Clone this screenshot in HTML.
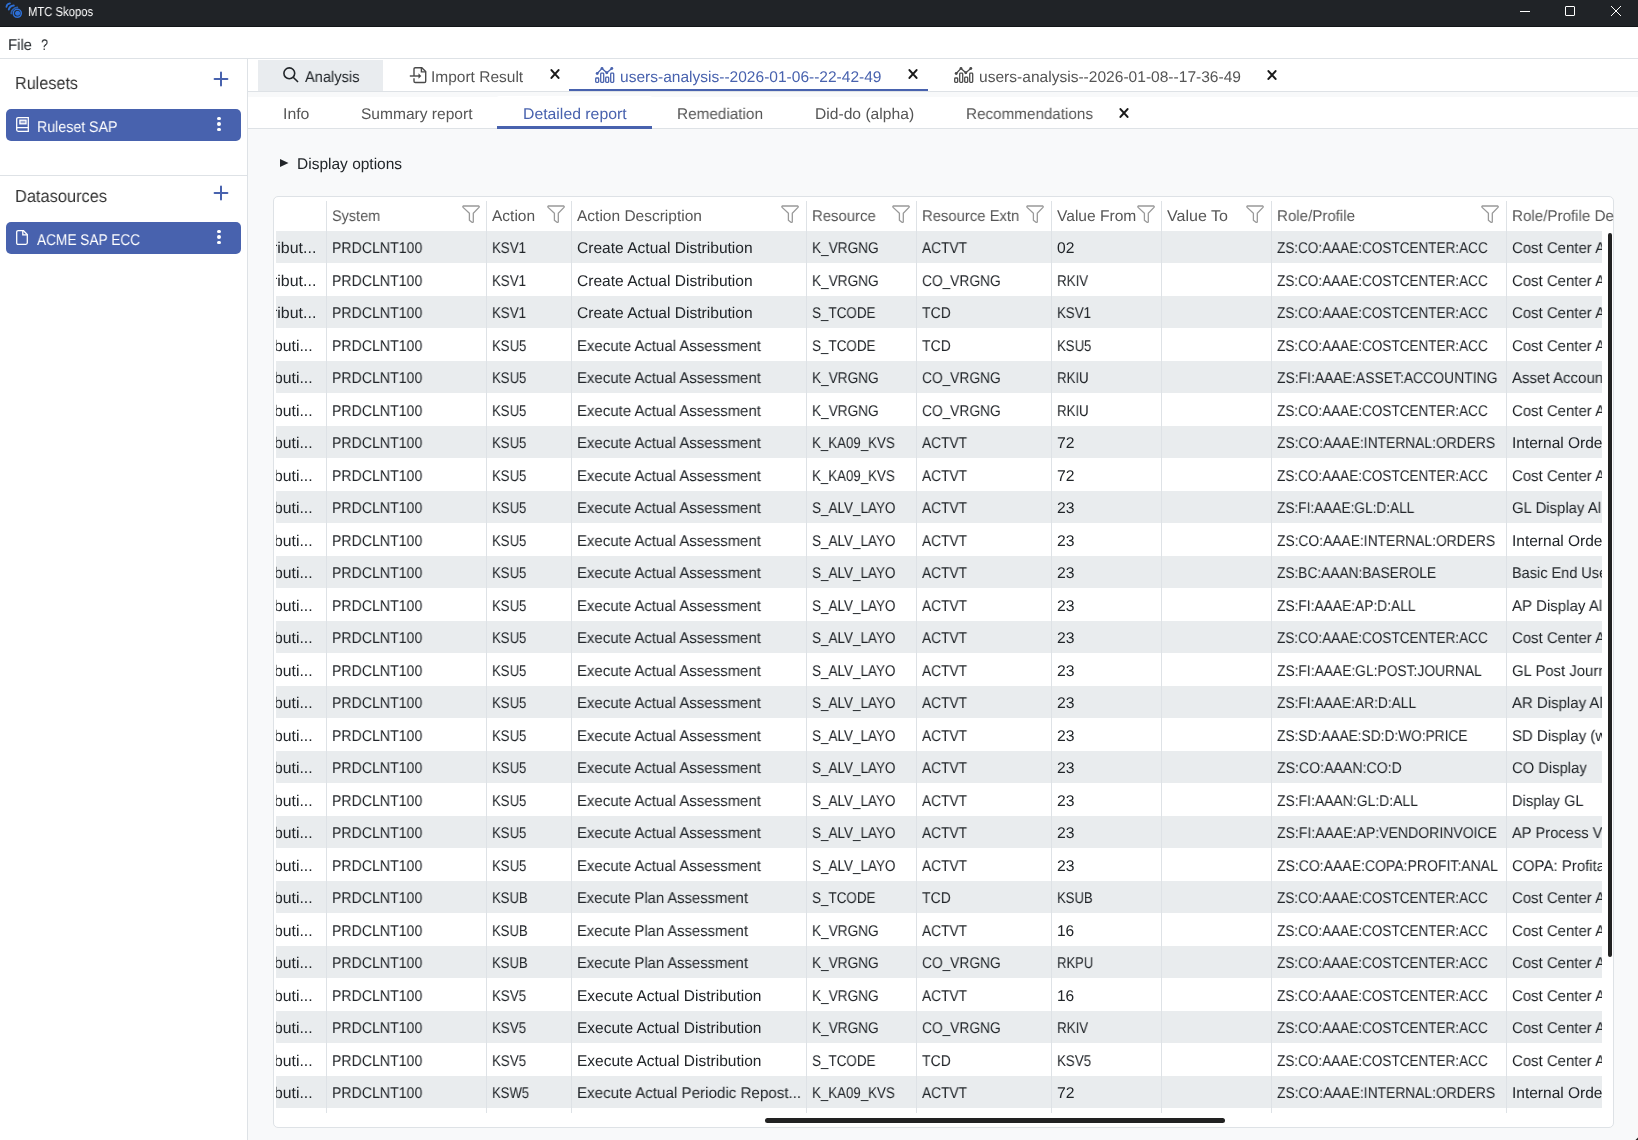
<!DOCTYPE html>
<html><head><meta charset="utf-8"><style>
*{box-sizing:border-box}
html,body{margin:0;padding:0}
body{width:1638px;height:1140px;overflow:hidden;position:relative;background:#f8f9fa;font-family:"Liberation Sans",sans-serif;color:#212529;text-rendering:geometricPrecision}
.a{position:absolute}
.t{position:absolute;white-space:nowrap;line-height:1;transform-origin:0 0;will-change:transform}
svg{position:absolute;overflow:visible}
</style></head><body>
<div class="a" style="left:0;top:0;width:1638px;height:26px;background:#202327"></div>
<div class="a" style="left:0;top:26px;width:1638px;height:1px;background:#121518"></div>
<svg style="left:0;top:0" width="24" height="22" viewBox="0 0 24 22"><g fill="none" stroke="#2d6fd6" stroke-linecap="round"><path d="M6.4 6.8A4.2 4.2 0 0 1 10 3.3" stroke-width="1.7"/><path d="M8.8 9.6A5.6 5.6 0 0 1 13.8 5.5" stroke-width="1.9"/><path d="M11.2 13.6A6.4 6.4 0 0 1 17.4 7.4" stroke-width="1.6" stroke-dasharray="1.2 0.9" opacity="0.8"/><circle cx="17.3" cy="13.3" r="4" stroke-width="1.6"/></g><circle cx="17.6" cy="13.3" r="2.5" fill="#2d6fd6"/></svg>
<div class="t" style="left:27.50px;top:5.20px;font-size:13px;transform:scaleX(0.8652);color:#ffffff;">MTC Skopos</div>
<div class="a" style="left:1520px;top:11px;width:10px;height:1px;background:#fff"></div>
<div class="a" style="left:1565px;top:6px;width:10px;height:10px;border:1px solid #fff;border-radius:1px"></div>
<svg style="left:1611px;top:6px" width="10" height="10" viewBox="0 0 10 10"><path d="M0 0L10 10M10 0L0 10" stroke="#fff" stroke-width="1"/></svg>
<div class="a" style="left:0;top:27px;width:1638px;height:31px;background:#fff"></div>
<div class="t" style="left:8.20px;top:37.68px;font-size:15.5px;transform:scaleX(0.9609);color:#212529;">File</div>
<div class="t" style="left:41.00px;top:37.68px;font-size:15.5px;transform:scaleX(0.8120);color:#212529;">?</div>
<div class="a" style="left:0;top:58px;width:1638px;height:1px;background:#dee2e6"></div>
<div class="a" style="left:0;top:59px;width:247px;height:1081px;background:#fff"></div>
<div class="a" style="left:247px;top:59px;width:1px;height:1081px;background:#dee2e6"></div>
<div class="t" style="left:14.80px;top:74.69px;font-size:17.5px;transform:scaleX(0.9253);color:#333;">Rulesets</div>
<svg style="left:214px;top:72.1px" width="14" height="14" viewBox="0 0 14 14"><path d="M7 0.6V13.4M0.6 7H13.4" stroke="#4862ae" stroke-width="2" stroke-linecap="round"/></svg>
<div class="a" style="left:6px;top:109px;width:235px;height:32px;background:#4862ae;border-radius:5px"></div><svg style="left:16px;top:117px" width="13" height="15" viewBox="0 0 13 15"><g fill="none" stroke="#fff" stroke-width="1.3"><path d="M12.3 0.7H2.2Q0.7 0.7 0.7 2.2V12.8Q0.7 14.3 2.2 14.3H12.3Z"/><path d="M0.7 11.2Q0.7 10.7 2 10.7H12.3"/><rect x="3.9" y="3.2" width="6.1" height="3.6" fill="rgba(255,255,255,0.45)"/></g></svg><div class="t" style="left:36.50px;top:119.58px;font-size:15.5px;transform:scaleX(0.9161);color:#fff;">Ruleset SAP</div><div class="a" style="left:217.3px;top:116.7px;width:3.8px;height:3.8px;border-radius:50%;background:#fff"></div><div class="a" style="left:217.3px;top:122.2px;width:3.8px;height:3.8px;border-radius:50%;background:#fff"></div><div class="a" style="left:217.3px;top:127.7px;width:3.8px;height:3.8px;border-radius:50%;background:#fff"></div>
<div class="a" style="left:0;top:175px;width:247px;height:1px;background:#dee2e6"></div>
<div class="t" style="left:14.80px;top:187.69px;font-size:17.5px;transform:scaleX(0.9365);color:#333;">Datasources</div>
<svg style="left:214px;top:186.3px" width="14" height="14" viewBox="0 0 14 14"><path d="M7 0.6V13.4M0.6 7H13.4" stroke="#4862ae" stroke-width="2" stroke-linecap="round"/></svg>
<div class="a" style="left:6px;top:222px;width:235px;height:32px;background:#4862ae;border-radius:5px"></div><svg style="left:16px;top:230px" width="12" height="15" viewBox="0 0 12 15"><g fill="none" stroke="#fff" stroke-width="1.3"><path d="M2.2 0.7H7.5L11.3 4.5V12.8Q11.3 14.3 9.8 14.3H2.2Q0.7 14.3 0.7 12.8V2.2Q0.7 0.7 2.2 0.7Z"/><path d="M6.8 0.7V4.8H11.3"/></g></svg><div class="t" style="left:36.50px;top:232.58px;font-size:15.5px;transform:scaleX(0.8814);color:#fff;">ACME SAP ECC</div><div class="a" style="left:217.3px;top:229.7px;width:3.8px;height:3.8px;border-radius:50%;background:#fff"></div><div class="a" style="left:217.3px;top:235.2px;width:3.8px;height:3.8px;border-radius:50%;background:#fff"></div><div class="a" style="left:217.3px;top:240.7px;width:3.8px;height:3.8px;border-radius:50%;background:#fff"></div>
<div class="a" style="left:248px;top:59px;width:1390px;height:32px;background:#fff"></div>
<div class="a" style="left:248px;top:91px;width:1390px;height:1px;background:#dee2e6"></div>
<div class="a" style="left:258px;top:60px;width:125px;height:31px;background:#e9ecef"></div>
<svg style="left:283px;top:67px" width="16" height="16" viewBox="0 0 16 16"><g fill="none" stroke="#212529" stroke-width="1.6"><circle cx="6.3" cy="6.3" r="5.4"/><path d="M10.2 10.2L15 15"/></g></svg>
<div class="t" style="left:304.50px;top:69.88px;font-size:15.5px;transform:scaleX(0.9443);color:#212529;">Analysis</div>
<svg style="left:409px;top:67px" width="18" height="16" viewBox="0 0 18 16"><g fill="none" stroke="#4a4a4a" stroke-width="1.4"><path d="M5 9V2Q5 0.7 6.3 0.7H12.8L16.7 4.6V14.2Q16.7 15.5 15.4 15.5H6.3Q5 15.5 5 14.2V11.3"/><path d="M12.4 0.7V4.9H16.7"/><path d="M0.8 9H10.5"/></g><path d="M9.5 6.2L12.3 9L9.5 11.8Z" fill="#4a4a4a"/></svg>
<div class="t" style="left:430.70px;top:69.88px;font-size:15.5px;transform:scaleX(0.9982);color:#555;">Import Result</div>
<svg style="left:549.7px;top:69.3px" width="10" height="10" viewBox="0 0 10 10"><path d="M1.45 1.1L8.55 8.9M8.55 1.1L1.45 8.9" stroke="#1a1a1a" stroke-width="2.1" stroke-linecap="round"/></svg>
<svg style="left:594.5px;top:67px" width="20" height="16" viewBox="0 0 20 16"><g fill="none" stroke="#4862ae" stroke-width="1.3" stroke-linejoin="round" stroke-linecap="round"><path d="M2.2 6.5L7 1.4L11.8 5.7L16.8 1.5"/><rect x="0.7" y="11" width="3" height="4.3" rx="0.8"/><rect x="5.7" y="6.2" width="3" height="9.1" rx="0.8"/><rect x="10.7" y="10.2" width="3" height="5.1" rx="0.8"/><rect x="15.7" y="6.2" width="3" height="9.1" rx="0.8"/></g><g fill="#4862ae"><circle cx="2.2" cy="6.5" r="1.45"/><circle cx="7" cy="1.4" r="1.45"/><circle cx="11.8" cy="5.7" r="1.45"/><circle cx="16.8" cy="1.5" r="1.45"/></g></svg>
<div class="t" style="left:620.00px;top:69.88px;font-size:15.5px;transform:scaleX(1.0018);color:#4862ae;">users-analysis--2026-01-06--22-42-49</div>
<svg style="left:907.6px;top:69.3px" width="10" height="10" viewBox="0 0 10 10"><path d="M1.45 1.1L8.55 8.9M8.55 1.1L1.45 8.9" stroke="#1a1a1a" stroke-width="2.1" stroke-linecap="round"/></svg>
<div class="a" style="left:569px;top:88.5px;width:359px;height:2.5px;background:#4862ae"></div>
<svg style="left:953.5px;top:67px" width="20" height="16" viewBox="0 0 20 16"><g fill="none" stroke="#4a4a4a" stroke-width="1.3" stroke-linejoin="round" stroke-linecap="round"><path d="M2.2 6.5L7 1.4L11.8 5.7L16.8 1.5"/><rect x="0.7" y="11" width="3" height="4.3" rx="0.8"/><rect x="5.7" y="6.2" width="3" height="9.1" rx="0.8"/><rect x="10.7" y="10.2" width="3" height="5.1" rx="0.8"/><rect x="15.7" y="6.2" width="3" height="9.1" rx="0.8"/></g><g fill="#4a4a4a"><circle cx="2.2" cy="6.5" r="1.45"/><circle cx="7" cy="1.4" r="1.45"/><circle cx="11.8" cy="5.7" r="1.45"/><circle cx="16.8" cy="1.5" r="1.45"/></g></svg>
<div class="t" style="left:978.50px;top:69.88px;font-size:15.5px;transform:scaleX(1.0037);color:#555;">users-analysis--2026-01-08--17-36-49</div>
<svg style="left:1266.7px;top:69.7px" width="10" height="10" viewBox="0 0 10 10"><path d="M1.45 1.1L8.55 8.9M8.55 1.1L1.45 8.9" stroke="#1a1a1a" stroke-width="2.1" stroke-linecap="round"/></svg>
<div class="a" style="left:248px;top:97px;width:1390px;height:31px;background:#fff"></div>
<div class="a" style="left:497px;top:96px;width:155px;height:2px;background:#fff;border-radius:3px 3px 0 0"></div>
<div class="a" style="left:248px;top:128px;width:1390px;height:1px;background:#dee2e6"></div>
<div class="t" style="left:283.00px;top:106.88px;font-size:15.5px;transform:scaleX(1.0211);color:#555;">Info</div>
<div class="t" style="left:360.50px;top:106.88px;font-size:15.5px;transform:scaleX(1.0035);color:#555;">Summary report</div>
<div class="t" style="left:677.00px;top:106.88px;font-size:15.5px;transform:scaleX(0.9883);color:#555;">Remediation</div>
<div class="t" style="left:814.50px;top:106.88px;font-size:15.5px;transform:scaleX(1.0090);color:#555;">Did-do (alpha)</div>
<div class="t" style="left:965.50px;top:106.88px;font-size:15.5px;transform:scaleX(0.9827);color:#555;">Recommendations</div>
<div class="t" style="left:522.50px;top:106.88px;font-size:15.5px;transform:scaleX(1.0190);color:#4862ae;">Detailed report</div>
<div class="a" style="left:497px;top:126px;width:155px;height:2.5px;background:#4862ae"></div>
<svg style="left:1118.7px;top:108px" width="10" height="10" viewBox="0 0 10 10"><path d="M1.45 1.1L8.55 8.9M8.55 1.1L1.45 8.9" stroke="#1a1a1a" stroke-width="2.1" stroke-linecap="round"/></svg>
<svg style="left:279.5px;top:158.5px" width="9" height="9" viewBox="0 0 9 9"><path d="M0 0L8.5 4L0 8Z" fill="#212529"/></svg>
<div class="t" style="left:296.60px;top:156.88px;font-size:15.5px;transform:scaleX(0.9990);color:#212529;">Display options</div>
<div class="a" style="left:273px;top:196px;width:1341px;height:932px;background:#fff;border:1px solid #dee2e6;border-radius:5px"></div>
<div class="a" style="left:276px;top:231.0px;width:1326px;height:32px;background:#e9ecee"></div><div class="a" style="left:276px;top:296.0px;width:1326px;height:32px;background:#e9ecee"></div><div class="a" style="left:276px;top:361.0px;width:1326px;height:32px;background:#e9ecee"></div><div class="a" style="left:276px;top:426.0px;width:1326px;height:32px;background:#e9ecee"></div><div class="a" style="left:276px;top:491.0px;width:1326px;height:32px;background:#e9ecee"></div><div class="a" style="left:276px;top:556.0px;width:1326px;height:32px;background:#e9ecee"></div><div class="a" style="left:276px;top:621.0px;width:1326px;height:32px;background:#e9ecee"></div><div class="a" style="left:276px;top:686.0px;width:1326px;height:32px;background:#e9ecee"></div><div class="a" style="left:276px;top:751.0px;width:1326px;height:32px;background:#e9ecee"></div><div class="a" style="left:276px;top:816.0px;width:1326px;height:32px;background:#e9ecee"></div><div class="a" style="left:276px;top:881.0px;width:1326px;height:32px;background:#e9ecee"></div><div class="a" style="left:276px;top:946.0px;width:1326px;height:32px;background:#e9ecee"></div><div class="a" style="left:276px;top:1011.0px;width:1326px;height:32px;background:#e9ecee"></div><div class="a" style="left:276px;top:1076.0px;width:1326px;height:32px;background:#e9ecee"></div>
<div class="a" style="left:326px;top:201px;width:1px;height:912px;background:#dee2e6"></div>
<div class="a" style="left:486px;top:201px;width:1px;height:912px;background:#dee2e6"></div>
<div class="a" style="left:571px;top:201px;width:1px;height:912px;background:#dee2e6"></div>
<div class="a" style="left:806px;top:201px;width:1px;height:912px;background:#dee2e6"></div>
<div class="a" style="left:916px;top:201px;width:1px;height:912px;background:#dee2e6"></div>
<div class="a" style="left:1051px;top:201px;width:1px;height:912px;background:#dee2e6"></div>
<div class="a" style="left:1161px;top:201px;width:1px;height:912px;background:#dee2e6"></div>
<div class="a" style="left:1271px;top:201px;width:1px;height:912px;background:#dee2e6"></div>
<div class="a" style="left:1506px;top:201px;width:1px;height:912px;background:#dee2e6"></div>
<div class="t" style="left:332.00px;top:208.88px;font-size:15.5px;transform:scaleX(0.9323);color:#555;">System</div>
<div class="t" style="left:492.00px;top:208.88px;font-size:15.5px;transform:scaleX(0.9946);color:#555;">Action</div>
<div class="t" style="left:577.00px;top:208.88px;font-size:15.5px;transform:scaleX(0.9995);color:#555;">Action Description</div>
<div class="t" style="left:812.00px;top:208.88px;font-size:15.5px;transform:scaleX(0.9607);color:#555;">Resource</div>
<div class="t" style="left:922.00px;top:208.88px;font-size:15.5px;transform:scaleX(0.9564);color:#555;">Resource Extn</div>
<div class="t" style="left:1057.00px;top:208.88px;font-size:15.5px;transform:scaleX(1.0039);color:#555;">Value From</div>
<div class="t" style="left:1167.00px;top:208.88px;font-size:15.5px;transform:scaleX(1.0346);color:#555;">Value To</div>
<div class="t" style="left:1277.00px;top:208.88px;font-size:15.5px;transform:scaleX(0.9740);color:#555;">Role/Profile</div>
<div class="t" style="left:1512.00px;top:208.88px;font-size:15.5px;transform:scaleX(0.9776);color:#555;">Role/Profile De</div>
<svg style="left:461.5px;top:205px" width="18" height="18" viewBox="0 0 18 18"><path d="M1.2 1H16.8Q17.6 1.4 17 2.4L11.3 8.3V16.8Q11 17.9 9.9 17.2L7.4 15.2V8.3L1.1 2.4Q0.5 1.4 1.2 1Z" fill="none" stroke="#999" stroke-width="1.3" stroke-linejoin="round"/></svg>
<svg style="left:546.5px;top:205px" width="18" height="18" viewBox="0 0 18 18"><path d="M1.2 1H16.8Q17.6 1.4 17 2.4L11.3 8.3V16.8Q11 17.9 9.9 17.2L7.4 15.2V8.3L1.1 2.4Q0.5 1.4 1.2 1Z" fill="none" stroke="#999" stroke-width="1.3" stroke-linejoin="round"/></svg>
<svg style="left:780.5px;top:205px" width="18" height="18" viewBox="0 0 18 18"><path d="M1.2 1H16.8Q17.6 1.4 17 2.4L11.3 8.3V16.8Q11 17.9 9.9 17.2L7.4 15.2V8.3L1.1 2.4Q0.5 1.4 1.2 1Z" fill="none" stroke="#999" stroke-width="1.3" stroke-linejoin="round"/></svg>
<svg style="left:891.5px;top:205px" width="18" height="18" viewBox="0 0 18 18"><path d="M1.2 1H16.8Q17.6 1.4 17 2.4L11.3 8.3V16.8Q11 17.9 9.9 17.2L7.4 15.2V8.3L1.1 2.4Q0.5 1.4 1.2 1Z" fill="none" stroke="#999" stroke-width="1.3" stroke-linejoin="round"/></svg>
<svg style="left:1026px;top:205px" width="18" height="18" viewBox="0 0 18 18"><path d="M1.2 1H16.8Q17.6 1.4 17 2.4L11.3 8.3V16.8Q11 17.9 9.9 17.2L7.4 15.2V8.3L1.1 2.4Q0.5 1.4 1.2 1Z" fill="none" stroke="#999" stroke-width="1.3" stroke-linejoin="round"/></svg>
<svg style="left:1136.5px;top:205px" width="18" height="18" viewBox="0 0 18 18"><path d="M1.2 1H16.8Q17.6 1.4 17 2.4L11.3 8.3V16.8Q11 17.9 9.9 17.2L7.4 15.2V8.3L1.1 2.4Q0.5 1.4 1.2 1Z" fill="none" stroke="#999" stroke-width="1.3" stroke-linejoin="round"/></svg>
<svg style="left:1246px;top:205px" width="18" height="18" viewBox="0 0 18 18"><path d="M1.2 1H16.8Q17.6 1.4 17 2.4L11.3 8.3V16.8Q11 17.9 9.9 17.2L7.4 15.2V8.3L1.1 2.4Q0.5 1.4 1.2 1Z" fill="none" stroke="#999" stroke-width="1.3" stroke-linejoin="round"/></svg>
<svg style="left:1481px;top:205px" width="18" height="18" viewBox="0 0 18 18"><path d="M1.2 1H16.8Q17.6 1.4 17 2.4L11.3 8.3V16.8Q11 17.9 9.9 17.2L7.4 15.2V8.3L1.1 2.4Q0.5 1.4 1.2 1Z" fill="none" stroke="#999" stroke-width="1.3" stroke-linejoin="round"/></svg>
<div class="a" style="left:276px;top:197px;width:1326px;height:930px;overflow:hidden"><div class="t" style="left:-3.61px;top:43.68px;font-size:15.5px;transform:scaleX(1.0287);">ribut...</div><div class="t" style="left:56.00px;top:43.68px;font-size:15.5px;transform:scaleX(0.9115);">PRDCLNT100</div><div class="t" style="left:216.00px;top:43.68px;font-size:15.5px;transform:scaleX(0.8574);">KSV1</div><div class="t" style="left:301.00px;top:43.68px;font-size:15.5px;transform:scaleX(1.0043);">Create Actual Distribution</div><div class="t" style="left:536.00px;top:43.68px;font-size:15.5px;transform:scaleX(0.8792);">K_VRGNG</div><div class="t" style="left:646.00px;top:43.68px;font-size:15.5px;transform:scaleX(0.8867);">ACTVT</div><div class="t" style="left:781.00px;top:43.68px;font-size:15.5px;transform:scaleX(1.0108);">02</div><div class="t" style="left:1001.00px;top:43.68px;font-size:15.5px;transform:scaleX(0.8737);">ZS:CO:AAAE:COSTCENTER:ACC</div><div class="t" style="left:1236.00px;top:43.68px;font-size:15.5px;transform:scaleX(0.9643);">Cost Center A</div><div class="t" style="left:-3.61px;top:76.68px;font-size:15.5px;transform:scaleX(1.0287);">ribut...</div><div class="t" style="left:56.00px;top:76.68px;font-size:15.5px;transform:scaleX(0.9115);">PRDCLNT100</div><div class="t" style="left:216.00px;top:76.68px;font-size:15.5px;transform:scaleX(0.8574);">KSV1</div><div class="t" style="left:301.00px;top:76.68px;font-size:15.5px;transform:scaleX(1.0043);">Create Actual Distribution</div><div class="t" style="left:536.00px;top:76.68px;font-size:15.5px;transform:scaleX(0.8792);">K_VRGNG</div><div class="t" style="left:646.00px;top:76.68px;font-size:15.5px;transform:scaleX(0.8866);">CO_VRGNG</div><div class="t" style="left:781.00px;top:76.68px;font-size:15.5px;transform:scaleX(0.8642);">RKIV</div><div class="t" style="left:1001.00px;top:76.68px;font-size:15.5px;transform:scaleX(0.8737);">ZS:CO:AAAE:COSTCENTER:ACC</div><div class="t" style="left:1236.00px;top:76.68px;font-size:15.5px;transform:scaleX(0.9643);">Cost Center A</div><div class="t" style="left:-3.61px;top:108.68px;font-size:15.5px;transform:scaleX(1.0287);">ribut...</div><div class="t" style="left:56.00px;top:108.68px;font-size:15.5px;transform:scaleX(0.9115);">PRDCLNT100</div><div class="t" style="left:216.00px;top:108.68px;font-size:15.5px;transform:scaleX(0.8574);">KSV1</div><div class="t" style="left:301.00px;top:108.68px;font-size:15.5px;transform:scaleX(1.0043);">Create Actual Distribution</div><div class="t" style="left:536.00px;top:108.68px;font-size:15.5px;transform:scaleX(0.8677);">S_TCODE</div><div class="t" style="left:646.00px;top:108.68px;font-size:15.5px;transform:scaleX(0.9035);">TCD</div><div class="t" style="left:781.00px;top:108.68px;font-size:15.5px;transform:scaleX(0.8574);">KSV1</div><div class="t" style="left:1001.00px;top:108.68px;font-size:15.5px;transform:scaleX(0.8737);">ZS:CO:AAAE:COSTCENTER:ACC</div><div class="t" style="left:1236.00px;top:108.68px;font-size:15.5px;transform:scaleX(0.9643);">Cost Center A</div><div class="t" style="left:-2.45px;top:141.68px;font-size:15.5px;transform:scaleX(1.0196);">buti...</div><div class="t" style="left:56.00px;top:141.68px;font-size:15.5px;transform:scaleX(0.9115);">PRDCLNT100</div><div class="t" style="left:216.00px;top:141.68px;font-size:15.5px;transform:scaleX(0.8516);">KSU5</div><div class="t" style="left:301.00px;top:141.68px;font-size:15.5px;transform:scaleX(0.9659);">Execute Actual Assessment</div><div class="t" style="left:536.00px;top:141.68px;font-size:15.5px;transform:scaleX(0.8677);">S_TCODE</div><div class="t" style="left:646.00px;top:141.68px;font-size:15.5px;transform:scaleX(0.9035);">TCD</div><div class="t" style="left:781.00px;top:141.68px;font-size:15.5px;transform:scaleX(0.8516);">KSU5</div><div class="t" style="left:1001.00px;top:141.68px;font-size:15.5px;transform:scaleX(0.8737);">ZS:CO:AAAE:COSTCENTER:ACC</div><div class="t" style="left:1236.00px;top:141.68px;font-size:15.5px;transform:scaleX(0.9643);">Cost Center A</div><div class="t" style="left:-2.45px;top:173.68px;font-size:15.5px;transform:scaleX(1.0196);">buti...</div><div class="t" style="left:56.00px;top:173.68px;font-size:15.5px;transform:scaleX(0.9115);">PRDCLNT100</div><div class="t" style="left:216.00px;top:173.68px;font-size:15.5px;transform:scaleX(0.8516);">KSU5</div><div class="t" style="left:301.00px;top:173.68px;font-size:15.5px;transform:scaleX(0.9659);">Execute Actual Assessment</div><div class="t" style="left:536.00px;top:173.68px;font-size:15.5px;transform:scaleX(0.8792);">K_VRGNG</div><div class="t" style="left:646.00px;top:173.68px;font-size:15.5px;transform:scaleX(0.8866);">CO_VRGNG</div><div class="t" style="left:781.00px;top:173.68px;font-size:15.5px;transform:scaleX(0.8550);">RKIU</div><div class="t" style="left:1001.00px;top:173.68px;font-size:15.5px;transform:scaleX(0.8982);">ZS:FI:AAAE:ASSET:ACCOUNTING</div><div class="t" style="left:1236.00px;top:173.68px;font-size:15.5px;transform:scaleX(0.9709);">Asset Accoun</div><div class="t" style="left:-2.45px;top:206.68px;font-size:15.5px;transform:scaleX(1.0196);">buti...</div><div class="t" style="left:56.00px;top:206.68px;font-size:15.5px;transform:scaleX(0.9115);">PRDCLNT100</div><div class="t" style="left:216.00px;top:206.68px;font-size:15.5px;transform:scaleX(0.8516);">KSU5</div><div class="t" style="left:301.00px;top:206.68px;font-size:15.5px;transform:scaleX(0.9659);">Execute Actual Assessment</div><div class="t" style="left:536.00px;top:206.68px;font-size:15.5px;transform:scaleX(0.8792);">K_VRGNG</div><div class="t" style="left:646.00px;top:206.68px;font-size:15.5px;transform:scaleX(0.8866);">CO_VRGNG</div><div class="t" style="left:781.00px;top:206.68px;font-size:15.5px;transform:scaleX(0.8550);">RKIU</div><div class="t" style="left:1001.00px;top:206.68px;font-size:15.5px;transform:scaleX(0.8737);">ZS:CO:AAAE:COSTCENTER:ACC</div><div class="t" style="left:1236.00px;top:206.68px;font-size:15.5px;transform:scaleX(0.9643);">Cost Center A</div><div class="t" style="left:-2.45px;top:238.68px;font-size:15.5px;transform:scaleX(1.0196);">buti...</div><div class="t" style="left:56.00px;top:238.68px;font-size:15.5px;transform:scaleX(0.9115);">PRDCLNT100</div><div class="t" style="left:216.00px;top:238.68px;font-size:15.5px;transform:scaleX(0.8516);">KSU5</div><div class="t" style="left:301.00px;top:238.68px;font-size:15.5px;transform:scaleX(0.9659);">Execute Actual Assessment</div><div class="t" style="left:536.00px;top:238.68px;font-size:15.5px;transform:scaleX(0.8574);">K_KA09_KVS</div><div class="t" style="left:646.00px;top:238.68px;font-size:15.5px;transform:scaleX(0.8867);">ACTVT</div><div class="t" style="left:781.00px;top:238.68px;font-size:15.5px;transform:scaleX(1.0161);">72</div><div class="t" style="left:1001.00px;top:238.68px;font-size:15.5px;transform:scaleX(0.8917);">ZS:CO:AAAE:INTERNAL:ORDERS</div><div class="t" style="left:1236.00px;top:238.68px;font-size:15.5px;transform:scaleX(0.9975);">Internal Orde</div><div class="t" style="left:-2.45px;top:271.68px;font-size:15.5px;transform:scaleX(1.0196);">buti...</div><div class="t" style="left:56.00px;top:271.68px;font-size:15.5px;transform:scaleX(0.9115);">PRDCLNT100</div><div class="t" style="left:216.00px;top:271.68px;font-size:15.5px;transform:scaleX(0.8516);">KSU5</div><div class="t" style="left:301.00px;top:271.68px;font-size:15.5px;transform:scaleX(0.9659);">Execute Actual Assessment</div><div class="t" style="left:536.00px;top:271.68px;font-size:15.5px;transform:scaleX(0.8574);">K_KA09_KVS</div><div class="t" style="left:646.00px;top:271.68px;font-size:15.5px;transform:scaleX(0.8867);">ACTVT</div><div class="t" style="left:781.00px;top:271.68px;font-size:15.5px;transform:scaleX(1.0161);">72</div><div class="t" style="left:1001.00px;top:271.68px;font-size:15.5px;transform:scaleX(0.8737);">ZS:CO:AAAE:COSTCENTER:ACC</div><div class="t" style="left:1236.00px;top:271.68px;font-size:15.5px;transform:scaleX(0.9643);">Cost Center A</div><div class="t" style="left:-2.45px;top:303.68px;font-size:15.5px;transform:scaleX(1.0196);">buti...</div><div class="t" style="left:56.00px;top:303.68px;font-size:15.5px;transform:scaleX(0.9115);">PRDCLNT100</div><div class="t" style="left:216.00px;top:303.68px;font-size:15.5px;transform:scaleX(0.8516);">KSU5</div><div class="t" style="left:301.00px;top:303.68px;font-size:15.5px;transform:scaleX(0.9659);">Execute Actual Assessment</div><div class="t" style="left:536.00px;top:303.68px;font-size:15.5px;transform:scaleX(0.8703);">S_ALV_LAYO</div><div class="t" style="left:646.00px;top:303.68px;font-size:15.5px;transform:scaleX(0.8867);">ACTVT</div><div class="t" style="left:781.00px;top:303.68px;font-size:15.5px;transform:scaleX(1.0161);">23</div><div class="t" style="left:1001.00px;top:303.68px;font-size:15.5px;transform:scaleX(0.8810);">ZS:FI:AAAE:GL:D:ALL</div><div class="t" style="left:1236.00px;top:303.68px;font-size:15.5px;transform:scaleX(0.9626);">GL Display Al</div><div class="t" style="left:-2.45px;top:336.68px;font-size:15.5px;transform:scaleX(1.0196);">buti...</div><div class="t" style="left:56.00px;top:336.68px;font-size:15.5px;transform:scaleX(0.9115);">PRDCLNT100</div><div class="t" style="left:216.00px;top:336.68px;font-size:15.5px;transform:scaleX(0.8516);">KSU5</div><div class="t" style="left:301.00px;top:336.68px;font-size:15.5px;transform:scaleX(0.9659);">Execute Actual Assessment</div><div class="t" style="left:536.00px;top:336.68px;font-size:15.5px;transform:scaleX(0.8703);">S_ALV_LAYO</div><div class="t" style="left:646.00px;top:336.68px;font-size:15.5px;transform:scaleX(0.8867);">ACTVT</div><div class="t" style="left:781.00px;top:336.68px;font-size:15.5px;transform:scaleX(1.0161);">23</div><div class="t" style="left:1001.00px;top:336.68px;font-size:15.5px;transform:scaleX(0.8917);">ZS:CO:AAAE:INTERNAL:ORDERS</div><div class="t" style="left:1236.00px;top:336.68px;font-size:15.5px;transform:scaleX(0.9975);">Internal Orde</div><div class="t" style="left:-2.45px;top:368.68px;font-size:15.5px;transform:scaleX(1.0196);">buti...</div><div class="t" style="left:56.00px;top:368.68px;font-size:15.5px;transform:scaleX(0.9115);">PRDCLNT100</div><div class="t" style="left:216.00px;top:368.68px;font-size:15.5px;transform:scaleX(0.8516);">KSU5</div><div class="t" style="left:301.00px;top:368.68px;font-size:15.5px;transform:scaleX(0.9659);">Execute Actual Assessment</div><div class="t" style="left:536.00px;top:368.68px;font-size:15.5px;transform:scaleX(0.8703);">S_ALV_LAYO</div><div class="t" style="left:646.00px;top:368.68px;font-size:15.5px;transform:scaleX(0.8867);">ACTVT</div><div class="t" style="left:781.00px;top:368.68px;font-size:15.5px;transform:scaleX(1.0161);">23</div><div class="t" style="left:1001.00px;top:368.68px;font-size:15.5px;transform:scaleX(0.8837);">ZS:BC:AAAN:BASEROLE</div><div class="t" style="left:1236.00px;top:368.68px;font-size:15.5px;transform:scaleX(0.9360);">Basic End Use</div><div class="t" style="left:-2.45px;top:401.68px;font-size:15.5px;transform:scaleX(1.0196);">buti...</div><div class="t" style="left:56.00px;top:401.68px;font-size:15.5px;transform:scaleX(0.9115);">PRDCLNT100</div><div class="t" style="left:216.00px;top:401.68px;font-size:15.5px;transform:scaleX(0.8516);">KSU5</div><div class="t" style="left:301.00px;top:401.68px;font-size:15.5px;transform:scaleX(0.9659);">Execute Actual Assessment</div><div class="t" style="left:536.00px;top:401.68px;font-size:15.5px;transform:scaleX(0.8703);">S_ALV_LAYO</div><div class="t" style="left:646.00px;top:401.68px;font-size:15.5px;transform:scaleX(0.8867);">ACTVT</div><div class="t" style="left:781.00px;top:401.68px;font-size:15.5px;transform:scaleX(1.0161);">23</div><div class="t" style="left:1001.00px;top:401.68px;font-size:15.5px;transform:scaleX(0.8886);">ZS:FI:AAAE:AP:D:ALL</div><div class="t" style="left:1236.00px;top:401.68px;font-size:15.5px;transform:scaleX(0.9724);">AP Display Al</div><div class="t" style="left:-2.45px;top:433.68px;font-size:15.5px;transform:scaleX(1.0196);">buti...</div><div class="t" style="left:56.00px;top:433.68px;font-size:15.5px;transform:scaleX(0.9115);">PRDCLNT100</div><div class="t" style="left:216.00px;top:433.68px;font-size:15.5px;transform:scaleX(0.8516);">KSU5</div><div class="t" style="left:301.00px;top:433.68px;font-size:15.5px;transform:scaleX(0.9659);">Execute Actual Assessment</div><div class="t" style="left:536.00px;top:433.68px;font-size:15.5px;transform:scaleX(0.8703);">S_ALV_LAYO</div><div class="t" style="left:646.00px;top:433.68px;font-size:15.5px;transform:scaleX(0.8867);">ACTVT</div><div class="t" style="left:781.00px;top:433.68px;font-size:15.5px;transform:scaleX(1.0161);">23</div><div class="t" style="left:1001.00px;top:433.68px;font-size:15.5px;transform:scaleX(0.8737);">ZS:CO:AAAE:COSTCENTER:ACC</div><div class="t" style="left:1236.00px;top:433.68px;font-size:15.5px;transform:scaleX(0.9643);">Cost Center A</div><div class="t" style="left:-2.45px;top:466.68px;font-size:15.5px;transform:scaleX(1.0196);">buti...</div><div class="t" style="left:56.00px;top:466.68px;font-size:15.5px;transform:scaleX(0.9115);">PRDCLNT100</div><div class="t" style="left:216.00px;top:466.68px;font-size:15.5px;transform:scaleX(0.8516);">KSU5</div><div class="t" style="left:301.00px;top:466.68px;font-size:15.5px;transform:scaleX(0.9659);">Execute Actual Assessment</div><div class="t" style="left:536.00px;top:466.68px;font-size:15.5px;transform:scaleX(0.8703);">S_ALV_LAYO</div><div class="t" style="left:646.00px;top:466.68px;font-size:15.5px;transform:scaleX(0.8867);">ACTVT</div><div class="t" style="left:781.00px;top:466.68px;font-size:15.5px;transform:scaleX(1.0161);">23</div><div class="t" style="left:1001.00px;top:466.68px;font-size:15.5px;transform:scaleX(0.8904);">ZS:FI:AAAE:GL:POST:JOURNAL</div><div class="t" style="left:1236.00px;top:466.68px;font-size:15.5px;transform:scaleX(0.9598);">GL Post Journ</div><div class="t" style="left:-2.45px;top:498.68px;font-size:15.5px;transform:scaleX(1.0196);">buti...</div><div class="t" style="left:56.00px;top:498.68px;font-size:15.5px;transform:scaleX(0.9115);">PRDCLNT100</div><div class="t" style="left:216.00px;top:498.68px;font-size:15.5px;transform:scaleX(0.8516);">KSU5</div><div class="t" style="left:301.00px;top:498.68px;font-size:15.5px;transform:scaleX(0.9659);">Execute Actual Assessment</div><div class="t" style="left:536.00px;top:498.68px;font-size:15.5px;transform:scaleX(0.8703);">S_ALV_LAYO</div><div class="t" style="left:646.00px;top:498.68px;font-size:15.5px;transform:scaleX(0.8867);">ACTVT</div><div class="t" style="left:781.00px;top:498.68px;font-size:15.5px;transform:scaleX(1.0161);">23</div><div class="t" style="left:1001.00px;top:498.68px;font-size:15.5px;transform:scaleX(0.8871);">ZS:FI:AAAE:AR:D:ALL</div><div class="t" style="left:1236.00px;top:498.68px;font-size:15.5px;transform:scaleX(0.9662);">AR Display Al</div><div class="t" style="left:-2.45px;top:531.68px;font-size:15.5px;transform:scaleX(1.0196);">buti...</div><div class="t" style="left:56.00px;top:531.68px;font-size:15.5px;transform:scaleX(0.9115);">PRDCLNT100</div><div class="t" style="left:216.00px;top:531.68px;font-size:15.5px;transform:scaleX(0.8516);">KSU5</div><div class="t" style="left:301.00px;top:531.68px;font-size:15.5px;transform:scaleX(0.9659);">Execute Actual Assessment</div><div class="t" style="left:536.00px;top:531.68px;font-size:15.5px;transform:scaleX(0.8703);">S_ALV_LAYO</div><div class="t" style="left:646.00px;top:531.68px;font-size:15.5px;transform:scaleX(0.8867);">ACTVT</div><div class="t" style="left:781.00px;top:531.68px;font-size:15.5px;transform:scaleX(1.0161);">23</div><div class="t" style="left:1001.00px;top:531.68px;font-size:15.5px;transform:scaleX(0.8846);">ZS:SD:AAAE:SD:D:WO:PRICE</div><div class="t" style="left:1236.00px;top:531.68px;font-size:15.5px;transform:scaleX(0.9671);">SD Display (w</div><div class="t" style="left:-2.45px;top:563.68px;font-size:15.5px;transform:scaleX(1.0196);">buti...</div><div class="t" style="left:56.00px;top:563.68px;font-size:15.5px;transform:scaleX(0.9115);">PRDCLNT100</div><div class="t" style="left:216.00px;top:563.68px;font-size:15.5px;transform:scaleX(0.8516);">KSU5</div><div class="t" style="left:301.00px;top:563.68px;font-size:15.5px;transform:scaleX(0.9659);">Execute Actual Assessment</div><div class="t" style="left:536.00px;top:563.68px;font-size:15.5px;transform:scaleX(0.8703);">S_ALV_LAYO</div><div class="t" style="left:646.00px;top:563.68px;font-size:15.5px;transform:scaleX(0.8867);">ACTVT</div><div class="t" style="left:781.00px;top:563.68px;font-size:15.5px;transform:scaleX(1.0161);">23</div><div class="t" style="left:1001.00px;top:563.68px;font-size:15.5px;transform:scaleX(0.9110);">ZS:CO:AAAN:CO:D</div><div class="t" style="left:1236.00px;top:563.68px;font-size:15.5px;transform:scaleX(0.9525);">CO Display</div><div class="t" style="left:-2.45px;top:596.68px;font-size:15.5px;transform:scaleX(1.0196);">buti...</div><div class="t" style="left:56.00px;top:596.68px;font-size:15.5px;transform:scaleX(0.9115);">PRDCLNT100</div><div class="t" style="left:216.00px;top:596.68px;font-size:15.5px;transform:scaleX(0.8516);">KSU5</div><div class="t" style="left:301.00px;top:596.68px;font-size:15.5px;transform:scaleX(0.9659);">Execute Actual Assessment</div><div class="t" style="left:536.00px;top:596.68px;font-size:15.5px;transform:scaleX(0.8703);">S_ALV_LAYO</div><div class="t" style="left:646.00px;top:596.68px;font-size:15.5px;transform:scaleX(0.8867);">ACTVT</div><div class="t" style="left:781.00px;top:596.68px;font-size:15.5px;transform:scaleX(1.0161);">23</div><div class="t" style="left:1001.00px;top:596.68px;font-size:15.5px;transform:scaleX(0.8982);">ZS:FI:AAAN:GL:D:ALL</div><div class="t" style="left:1236.00px;top:596.68px;font-size:15.5px;transform:scaleX(0.9428);">Display GL</div><div class="t" style="left:-2.45px;top:628.68px;font-size:15.5px;transform:scaleX(1.0196);">buti...</div><div class="t" style="left:56.00px;top:628.68px;font-size:15.5px;transform:scaleX(0.9115);">PRDCLNT100</div><div class="t" style="left:216.00px;top:628.68px;font-size:15.5px;transform:scaleX(0.8516);">KSU5</div><div class="t" style="left:301.00px;top:628.68px;font-size:15.5px;transform:scaleX(0.9659);">Execute Actual Assessment</div><div class="t" style="left:536.00px;top:628.68px;font-size:15.5px;transform:scaleX(0.8703);">S_ALV_LAYO</div><div class="t" style="left:646.00px;top:628.68px;font-size:15.5px;transform:scaleX(0.8867);">ACTVT</div><div class="t" style="left:781.00px;top:628.68px;font-size:15.5px;transform:scaleX(1.0161);">23</div><div class="t" style="left:1001.00px;top:628.68px;font-size:15.5px;transform:scaleX(0.9058);">ZS:FI:AAAE:AP:VENDORINVOICE</div><div class="t" style="left:1236.00px;top:628.68px;font-size:15.5px;transform:scaleX(0.9489);">AP Process Ve</div><div class="t" style="left:-2.45px;top:661.68px;font-size:15.5px;transform:scaleX(1.0196);">buti...</div><div class="t" style="left:56.00px;top:661.68px;font-size:15.5px;transform:scaleX(0.9115);">PRDCLNT100</div><div class="t" style="left:216.00px;top:661.68px;font-size:15.5px;transform:scaleX(0.8516);">KSU5</div><div class="t" style="left:301.00px;top:661.68px;font-size:15.5px;transform:scaleX(0.9659);">Execute Actual Assessment</div><div class="t" style="left:536.00px;top:661.68px;font-size:15.5px;transform:scaleX(0.8703);">S_ALV_LAYO</div><div class="t" style="left:646.00px;top:661.68px;font-size:15.5px;transform:scaleX(0.8867);">ACTVT</div><div class="t" style="left:781.00px;top:661.68px;font-size:15.5px;transform:scaleX(1.0161);">23</div><div class="t" style="left:1001.00px;top:661.68px;font-size:15.5px;transform:scaleX(0.9039);">ZS:CO:AAAE:COPA:PROFIT:ANAL</div><div class="t" style="left:1236.00px;top:661.68px;font-size:15.5px;transform:scaleX(0.9681);">COPA: Profitab</div><div class="t" style="left:-2.45px;top:693.68px;font-size:15.5px;transform:scaleX(1.0196);">buti...</div><div class="t" style="left:56.00px;top:693.68px;font-size:15.5px;transform:scaleX(0.9115);">PRDCLNT100</div><div class="t" style="left:216.00px;top:693.68px;font-size:15.5px;transform:scaleX(0.8456);">KSUB</div><div class="t" style="left:301.00px;top:693.68px;font-size:15.5px;transform:scaleX(0.9536);">Execute Plan Assessment</div><div class="t" style="left:536.00px;top:693.68px;font-size:15.5px;transform:scaleX(0.8677);">S_TCODE</div><div class="t" style="left:646.00px;top:693.68px;font-size:15.5px;transform:scaleX(0.9035);">TCD</div><div class="t" style="left:781.00px;top:693.68px;font-size:15.5px;transform:scaleX(0.8456);">KSUB</div><div class="t" style="left:1001.00px;top:693.68px;font-size:15.5px;transform:scaleX(0.8737);">ZS:CO:AAAE:COSTCENTER:ACC</div><div class="t" style="left:1236.00px;top:693.68px;font-size:15.5px;transform:scaleX(0.9643);">Cost Center A</div><div class="t" style="left:-2.45px;top:726.68px;font-size:15.5px;transform:scaleX(1.0196);">buti...</div><div class="t" style="left:56.00px;top:726.68px;font-size:15.5px;transform:scaleX(0.9115);">PRDCLNT100</div><div class="t" style="left:216.00px;top:726.68px;font-size:15.5px;transform:scaleX(0.8456);">KSUB</div><div class="t" style="left:301.00px;top:726.68px;font-size:15.5px;transform:scaleX(0.9536);">Execute Plan Assessment</div><div class="t" style="left:536.00px;top:726.68px;font-size:15.5px;transform:scaleX(0.8792);">K_VRGNG</div><div class="t" style="left:646.00px;top:726.68px;font-size:15.5px;transform:scaleX(0.8867);">ACTVT</div><div class="t" style="left:781.00px;top:726.68px;font-size:15.5px;transform:scaleX(0.9813);">16</div><div class="t" style="left:1001.00px;top:726.68px;font-size:15.5px;transform:scaleX(0.8737);">ZS:CO:AAAE:COSTCENTER:ACC</div><div class="t" style="left:1236.00px;top:726.68px;font-size:15.5px;transform:scaleX(0.9643);">Cost Center A</div><div class="t" style="left:-2.45px;top:758.68px;font-size:15.5px;transform:scaleX(1.0196);">buti...</div><div class="t" style="left:56.00px;top:758.68px;font-size:15.5px;transform:scaleX(0.9115);">PRDCLNT100</div><div class="t" style="left:216.00px;top:758.68px;font-size:15.5px;transform:scaleX(0.8456);">KSUB</div><div class="t" style="left:301.00px;top:758.68px;font-size:15.5px;transform:scaleX(0.9536);">Execute Plan Assessment</div><div class="t" style="left:536.00px;top:758.68px;font-size:15.5px;transform:scaleX(0.8792);">K_VRGNG</div><div class="t" style="left:646.00px;top:758.68px;font-size:15.5px;transform:scaleX(0.8866);">CO_VRGNG</div><div class="t" style="left:781.00px;top:758.68px;font-size:15.5px;transform:scaleX(0.8418);">RKPU</div><div class="t" style="left:1001.00px;top:758.68px;font-size:15.5px;transform:scaleX(0.8737);">ZS:CO:AAAE:COSTCENTER:ACC</div><div class="t" style="left:1236.00px;top:758.68px;font-size:15.5px;transform:scaleX(0.9643);">Cost Center A</div><div class="t" style="left:-2.45px;top:791.68px;font-size:15.5px;transform:scaleX(1.0196);">buti...</div><div class="t" style="left:56.00px;top:791.68px;font-size:15.5px;transform:scaleX(0.9115);">PRDCLNT100</div><div class="t" style="left:216.00px;top:791.68px;font-size:15.5px;transform:scaleX(0.8600);">KSV5</div><div class="t" style="left:301.00px;top:791.68px;font-size:15.5px;transform:scaleX(0.9981);">Execute Actual Distribution</div><div class="t" style="left:536.00px;top:791.68px;font-size:15.5px;transform:scaleX(0.8792);">K_VRGNG</div><div class="t" style="left:646.00px;top:791.68px;font-size:15.5px;transform:scaleX(0.8867);">ACTVT</div><div class="t" style="left:781.00px;top:791.68px;font-size:15.5px;transform:scaleX(0.9813);">16</div><div class="t" style="left:1001.00px;top:791.68px;font-size:15.5px;transform:scaleX(0.8737);">ZS:CO:AAAE:COSTCENTER:ACC</div><div class="t" style="left:1236.00px;top:791.68px;font-size:15.5px;transform:scaleX(0.9643);">Cost Center A</div><div class="t" style="left:-2.45px;top:823.68px;font-size:15.5px;transform:scaleX(1.0196);">buti...</div><div class="t" style="left:56.00px;top:823.68px;font-size:15.5px;transform:scaleX(0.9115);">PRDCLNT100</div><div class="t" style="left:216.00px;top:823.68px;font-size:15.5px;transform:scaleX(0.8600);">KSV5</div><div class="t" style="left:301.00px;top:823.68px;font-size:15.5px;transform:scaleX(0.9981);">Execute Actual Distribution</div><div class="t" style="left:536.00px;top:823.68px;font-size:15.5px;transform:scaleX(0.8792);">K_VRGNG</div><div class="t" style="left:646.00px;top:823.68px;font-size:15.5px;transform:scaleX(0.8866);">CO_VRGNG</div><div class="t" style="left:781.00px;top:823.68px;font-size:15.5px;transform:scaleX(0.8642);">RKIV</div><div class="t" style="left:1001.00px;top:823.68px;font-size:15.5px;transform:scaleX(0.8737);">ZS:CO:AAAE:COSTCENTER:ACC</div><div class="t" style="left:1236.00px;top:823.68px;font-size:15.5px;transform:scaleX(0.9643);">Cost Center A</div><div class="t" style="left:-2.45px;top:856.68px;font-size:15.5px;transform:scaleX(1.0196);">buti...</div><div class="t" style="left:56.00px;top:856.68px;font-size:15.5px;transform:scaleX(0.9115);">PRDCLNT100</div><div class="t" style="left:216.00px;top:856.68px;font-size:15.5px;transform:scaleX(0.8600);">KSV5</div><div class="t" style="left:301.00px;top:856.68px;font-size:15.5px;transform:scaleX(0.9981);">Execute Actual Distribution</div><div class="t" style="left:536.00px;top:856.68px;font-size:15.5px;transform:scaleX(0.8677);">S_TCODE</div><div class="t" style="left:646.00px;top:856.68px;font-size:15.5px;transform:scaleX(0.9035);">TCD</div><div class="t" style="left:781.00px;top:856.68px;font-size:15.5px;transform:scaleX(0.8600);">KSV5</div><div class="t" style="left:1001.00px;top:856.68px;font-size:15.5px;transform:scaleX(0.8737);">ZS:CO:AAAE:COSTCENTER:ACC</div><div class="t" style="left:1236.00px;top:856.68px;font-size:15.5px;transform:scaleX(0.9643);">Cost Center A</div><div class="t" style="left:-2.45px;top:888.68px;font-size:15.5px;transform:scaleX(1.0196);">buti...</div><div class="t" style="left:56.00px;top:888.68px;font-size:15.5px;transform:scaleX(0.9115);">PRDCLNT100</div><div class="t" style="left:216.00px;top:888.68px;font-size:15.5px;transform:scaleX(0.8445);">KSW5</div><div class="t" style="left:301.00px;top:888.68px;font-size:15.5px;transform:scaleX(0.9782);">Execute Actual Periodic Repost...</div><div class="t" style="left:536.00px;top:888.68px;font-size:15.5px;transform:scaleX(0.8574);">K_KA09_KVS</div><div class="t" style="left:646.00px;top:888.68px;font-size:15.5px;transform:scaleX(0.8867);">ACTVT</div><div class="t" style="left:781.00px;top:888.68px;font-size:15.5px;transform:scaleX(1.0161);">72</div><div class="t" style="left:1001.00px;top:888.68px;font-size:15.5px;transform:scaleX(0.8917);">ZS:CO:AAAE:INTERNAL:ORDERS</div><div class="t" style="left:1236.00px;top:888.68px;font-size:15.5px;transform:scaleX(0.9975);">Internal Orde</div></div>
<div class="a" style="left:1607.5px;top:233px;width:4.5px;height:724px;background:#222;border-radius:3px"></div>
<div class="a" style="left:765px;top:1118px;width:460px;height:5px;background:#222;border-radius:3px"></div>
<svg style="left:1632px;top:1134px" width="6" height="6" viewBox="0 0 6 6"><path d="M6 3.5V6H3.5Z" fill="#222"/></svg>
</body></html>
